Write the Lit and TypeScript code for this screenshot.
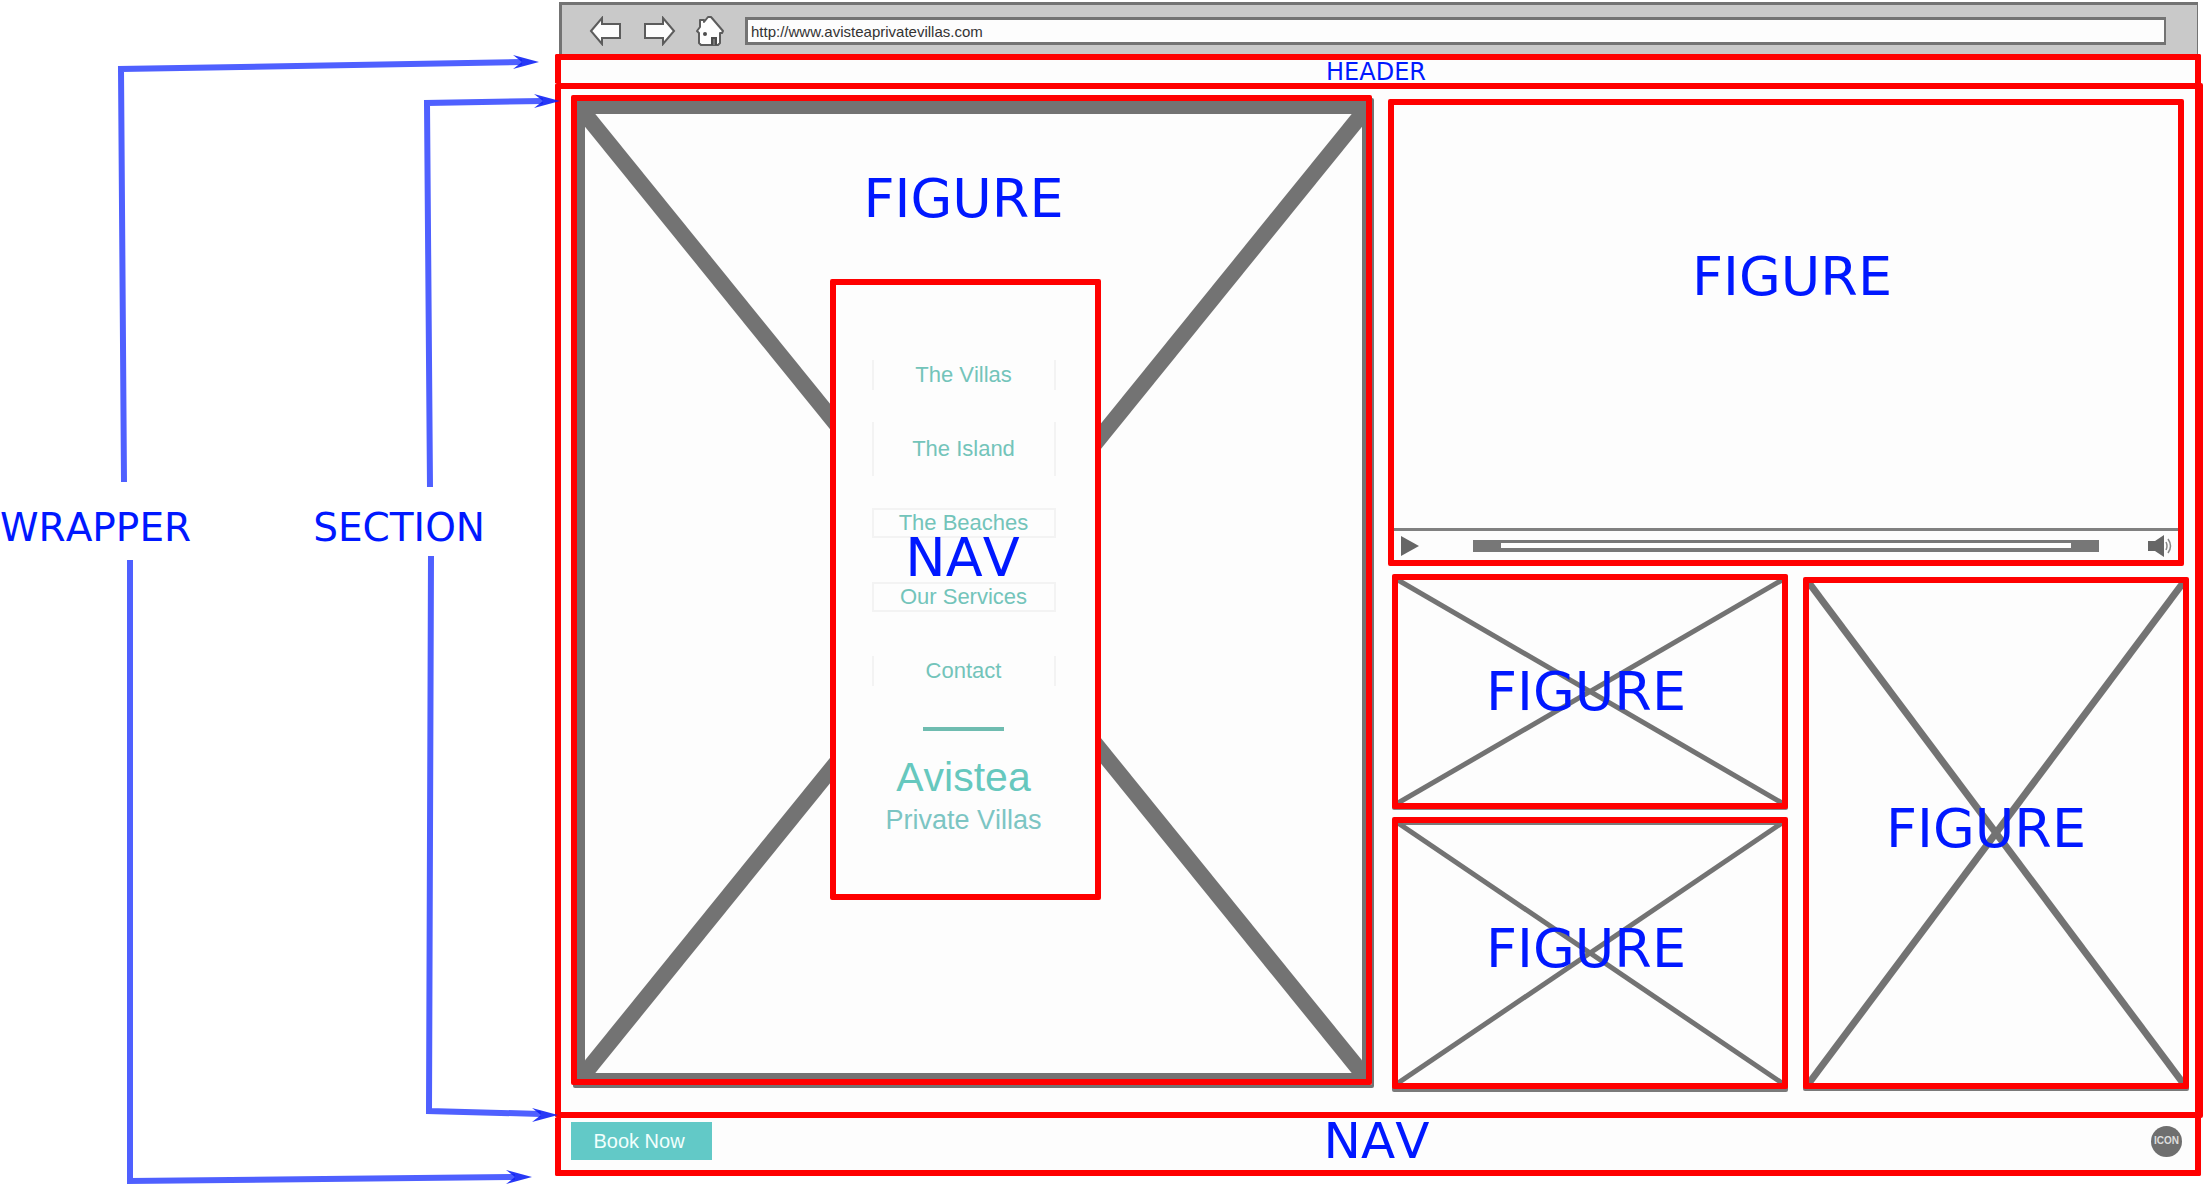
import { LitElement, html, css, svg } from "lit";
import { customElement, property } from "lit/decorators.js";

/** A wireframe placeholder: an outlined frame with a diagonal cross and a tag name. */
@customElement("wire-figure")
class WireFigure extends LitElement {
  @property() label = "FIGURE";
  @property({ type: Number }) stroke = 5;

  static styles = css`
    :host {
      display: block;
      position: relative;
      box-sizing: border-box;
      border: 6px solid #ff0000;
      border-radius: 2px;
      background: #fdfdfd;
      min-width: 0;
      min-height: 0;
    }
    .figure {
      margin: 0;
      width: 100%;
      height: 100%;
      display: flex;
      align-items: center;
      justify-content: center;
    }
    .cross {
      position: absolute;
      inset: 0;
      width: 100%;
      height: 100%;
    }
    .label {
      position: relative;
      font: 54px/60px Verdana, "DejaVu Sans", sans-serif;
      color: #0018ff;
      padding: var(--label-padding, 0 8px 0 0);
    }
  `;

  render() {
    return html`
      <figure class="figure">
        <svg class="cross" aria-hidden="true" stroke="#737373" stroke-width=${this.stroke}>
          <line x1="0" y1="0" x2="100%" y2="100%" />
          <line x1="100%" y1="0" x2="0" y2="100%" />
        </svg>
        <figcaption class="label">${this.label}</figcaption>
      </figure>
    `;
  }
}

/** Arrowhead whose tip sits at the given point. */
const head = (x: number, y: number) => svg`
  <path d="M${x} ${y} L${x - 26} ${y + 7} L${x - 17} ${y} L${x - 26} ${y - 7} Z" fill="#0f22f5" opacity="0.9" />`;

@customElement("app-root")
class AppRoot extends LitElement {
  static styles = css`
    :host {
      display: block;
      background: #fff;
      font-kerning: none;
    }
    * {
      box-sizing: border-box;
    }
    .page {
      display: grid;
      grid-template-columns: 555px minmax(0, 1fr);
      min-height: 100vh;
      padding: 2px 0 9px;
      position: relative;
      overflow: hidden;
    }
    .label {
      font-family: Verdana, "DejaVu Sans", sans-serif;
      color: #0018ff;
      margin: 0;
      font-weight: 400;
    }

    /* Notes on the left */
    .notes {
      display: flex;
      justify-content: space-between;
      align-items: flex-start;
      padding: 502px 70px 0 0;
    }
    .note {
      font-size: 39px;
      line-height: 48px;
    }
    .arrows {
      position: absolute;
      left: 0;
      top: 0;
      width: 562px;
      height: 1185px;
      z-index: 2;
      pointer-events: none;
    }

    /* Browser chrome */
    .browser {
      display: flex;
      flex-direction: column;
    }
    .bar {
      display: flex;
      align-items: center;
      height: 52px;
      margin: 0 5px 0 4px;
      padding: 3px 31px 0 27px;
      background: #c9c9c9;
      border: solid #737373;
      border-width: 3px 1px 0 3px;
    }
    .tool {
      display: block;
      padding: 0;
      border: 0;
      background: none;
      line-height: 0;
    }
    .forward {
      margin: 0 19px 0 23px;
    }
    .url {
      flex: 1;
      min-width: 0;
      height: 28px;
      margin-left: 20px;
      padding: 0 3px;
      border: 3px solid #737373;
      border-right-width: 2px;
      border-radius: 0;
      background: #fdfdfd;
      color: #333;
      font: 15px/20px "Liberation Sans", Arial, sans-serif;
    }

    /* Page regions */
    .wrapper {
      flex: 1;
      display: flex;
      flex-direction: column;
      background: #fdfdfd;
    }
    .header {
      display: flex;
      align-items: center;
      justify-content: center;
      height: 29px;
      margin-right: 2px;
      padding-right: 4px;
      border: solid #ff0000;
      border-width: 6px 6px 0;
      border-radius: 2px 2px 0 0;
    }
    .header .label {
      font-size: 24px;
      line-height: 24px;
    }
    .section {
      flex: 1;
      display: grid;
      grid-template-columns: repeat(2, minmax(0, 1fr));
      gap: 16px;
      padding: 6px 6px 23px 10px;
      border: 6px solid #ff0000;
      border-right-width: 8px;
      border-radius: 2px;
    }

    /* Hero figure */
    .hero {
      position: relative;
      display: flex;
      flex-direction: column;
      align-items: center;
      margin: 0 0 4px;
      padding: 68px 16px 0 0;
      border: 6px solid #ff0000;
      border-radius: 2px;
      box-shadow: 2px 3px 0 #737373;
    }
    .frame {
      position: absolute;
      inset: 0;
      border: solid #737373;
      border-width: 13px 4px 6px 8px;
    }
    .cross {
      position: absolute;
      inset: 0;
      width: 100%;
      height: 100%;
    }
    .big {
      position: relative;
      font-size: 54px;
      line-height: 60px;
    }
    .menu {
      position: relative;
      display: flex;
      flex-direction: column;
      align-items: center;
      width: 271px;
      height: 621px;
      margin: 50px 0 0 4px;
      padding: 75px 4px 0 0;
      border: 6px solid #ff0000;
      border-radius: 2px;
      background: #fdfdfd;
      font-family: "Liberation Sans", Arial, sans-serif;
      color: #73c4ba;
    }
    .links {
      display: flex;
      flex-direction: column;
      gap: 44px;
      margin: 0;
      padding: 0;
      list-style: none;
    }
    .link {
      display: flex;
      align-items: center;
      justify-content: center;
      width: 184px;
      height: 30px;
      border: solid #f3f3f3;
      border-width: 0 2px;
      color: inherit;
      text-decoration: none;
      font-size: 22px;
      line-height: 30px;
    }
    .link.boxed {
      border-width: 2px;
    }
    .link.long {
      height: 54px;
      margin: -12px 0;
    }
    .rule {
      width: 81px;
      height: 4px;
      margin: 41px 0 24px;
      border: 0;
      background: #6fbcb0;
    }
    .brand {
      margin: 0;
      font-weight: 400;
      font-size: 41px;
      line-height: 44px;
      color: #66c8be;
    }
    .tagline {
      margin: 5px 0 0;
      font-size: 27px;
      line-height: 32px;
      color: #7cc5c3;
    }
    .menu .big {
      position: absolute;
      top: 243px;
      left: 0;
      right: 6px;
      text-align: center;
    }

    /* Right column */
    .media {
      display: grid;
      grid-template-rows: minmax(0, 467fr) minmax(0, 515fr);
      gap: 8px;
      padding-top: 4px;
    }
    .video {
      display: flex;
      flex-direction: column;
      margin: 0 5px 0 0;
      border: 6px solid #ff0000;
      border-radius: 2px;
    }
    .stage {
      flex: 1;
      display: flex;
      align-items: center;
      justify-content: center;
      padding: 0 0 80px 12px;
    }
    .controls {
      display: flex;
      align-items: center;
      height: 32px;
      padding: 0 6px 0 7px;
      border-top: 3px solid #808080;
    }
    .seek {
      appearance: none;
      flex: 1;
      min-width: 0;
      height: 12px;
      margin: 0 49px 0 54px;
      background: linear-gradient(#fdfdfd, #fdfdfd) center / calc(100% - 56px) 5px no-repeat #777;
    }
    .seek::-webkit-slider-thumb {
      appearance: none;
      width: 1px;
      height: 1px;
      opacity: 0;
    }
    .gallery {
      display: grid;
      grid-template-columns: minmax(0, 396fr) minmax(0, 386fr);
      gap: 15px;
      padding-left: 4px;
    }
    .stack {
      display: grid;
      grid-template-rows: minmax(0, 235fr) minmax(0, 272fr);
      gap: 8px;
    }
    .small {
      --label-padding: 0 8px 0 0;
      box-shadow: 0 1px 0 #888;
    }
    .lower {
      --label-padding: 0 8px 8px 0;
      box-shadow: 0 3px 0 #7a7a7a, inset 0 2px 0 #7a7a7a;
    }
    .tall {
      --label-padding: 0 20px 8px 0;
      margin-top: 3px;
      box-shadow: 0 2px 0 #7a7a7a;
    }

    /* Bottom navigation */
    .footer {
      display: grid;
      grid-template-columns: 1fr auto 1fr;
      align-items: center;
      height: 58px;
      margin-right: 2px;
      padding: 0 13px 6px 10px;
      border: solid #ff0000;
      border-width: 0 6px 6px;
      border-radius: 0 0 2px 2px;
    }
    .book {
      justify-self: start;
      width: 141px;
      height: 38px;
      padding: 0 5px 0 0;
      border: 0;
      background: #62c9c7;
      color: #f2fffd;
      font: 20px/24px "Liberation Sans", Arial, sans-serif;
    }
    .footer .label {
      font-size: 50px;
      line-height: 46px;
    }
    .icon {
      justify-self: end;
      width: 31px;
      height: 31px;
      padding: 0;
      border: 0;
      border-radius: 50%;
      background: #6f6f6f;
      color: #dedede;
      font: bold 10px/12px "Liberation Sans", Arial, sans-serif;
    }
  `;

  private links = [
    { text: "The Villas", kind: "" },
    { text: "The Island", kind: "long" },
    { text: "The Beaches", kind: "boxed" },
    { text: "Our Services", kind: "boxed" },
    { text: "Contact", kind: "" },
  ];

  render() {
    return html`
      <div class="page">
        <aside class="notes">
          <span class="label note">WRAPPER</span>
          <span class="label note">SECTION</span>
        </aside>
        <svg class="arrows" viewBox="0 0 562 1185" aria-hidden="true">
          <g fill="none" stroke="#4f60ff" stroke-width="6">
            <path d="M124 482 L121 69 L522 62" />
            <path d="M430 487 L427 103 L543 101" />
            <path d="M130 560 L130 1181 L515 1177" />
            <path d="M431 556 L429 1111 L541 1114" />
          </g>
          ${head(539, 62)} ${head(560, 101)} ${head(532, 1177)} ${head(558, 1115)}
        </svg>

        <div class="browser">
          <div class="bar">
            <button class="tool" aria-label="Back">
              <svg width="32" height="30" viewBox="0 0 32 30">
                <path d="M2 15 L13 2 V8 H31 V22 H13 V28 Z" fill="#fdfdfd" stroke="#5c5c5c" stroke-width="2" />
              </svg>
            </button>
            <button class="tool forward" aria-label="Forward">
              <svg width="32" height="30" viewBox="0 0 32 30">
                <path d="M30 15 L19 2 V8 H1 V22 H19 V28 Z" fill="#fdfdfd" stroke="#5c5c5c" stroke-width="2" />
              </svg>
            </button>
            <button class="tool" aria-label="Home">
              <svg width="30" height="32" viewBox="0 0 30 32">
                <path
                  d="M2 16 L5 12 V5 H9 V7 L13 2 H16 L28 16 L27 18 L25 18 V28 L23 30 H6 L4 28 V18 Z"
                  fill="#fdfdfd" stroke="#5c5c5c" stroke-width="2" stroke-linejoin="round" />
                <circle cx="10" cy="19" r="2" fill="#4c4c4c" />
                <path d="M17 30 V23 H21 V30" fill="#777" stroke="#4c4c4c" stroke-width="2" />
              </svg>
            </button>
            <input class="url" type="text" aria-label="Address" value="http://www.avisteaprivatevillas.com" />
          </div>

          <div class="wrapper">
            <header class="header"><span class="label">HEADER</span></header>

            <section class="section">
              <figure class="hero">
                <div class="frame">
                  <svg class="cross" aria-hidden="true" stroke="#737373" stroke-width="16">
                    <line x1="0" y1="0" x2="100%" y2="100%" />
                    <line x1="100%" y1="0" x2="0" y2="100%" />
                  </svg>
                </div>
                <figcaption class="label big">FIGURE</figcaption>
                <nav class="menu">
                  <ul class="links">
                    ${this.links.map(
                      (l) => html`<li><a class="link ${l.kind}" href="#">${l.text}</a></li>`
                    )}
                  </ul>
                  <hr class="rule" />
                  <h1 class="brand">Avistea</h1>
                  <p class="tagline">Private Villas</p>
                  <span class="label big">NAV</span>
                </nav>
              </figure>

              <div class="media">
                <figure class="video">
                  <div class="stage"><figcaption class="label big">FIGURE</figcaption></div>
                  <div class="controls">
                    <button class="tool" aria-label="Play">
                      <svg width="18" height="20" viewBox="0 0 18 20"><path d="M0 0 L18 10 L0 20 Z" fill="#666" /></svg>
                    </button>
                    <input class="seek" type="range" aria-label="Seek" value="0" />
                    <button class="tool" aria-label="Volume">
                      <svg width="24" height="22" viewBox="0 0 24 22">
                        <path d="M0 6 H7 L16 0 V22 L7 16 H0 Z" fill="#666" />
                        <path d="M18 7 Q20 11 18 15 M20 4 Q25 11 20 18" fill="none" stroke="#888" stroke-width="1.5" />
                      </svg>
                    </button>
                  </div>
                </figure>
                <div class="gallery">
                  <div class="stack">
                    <wire-figure class="small"></wire-figure>
                    <wire-figure class="lower"></wire-figure>
                  </div>
                  <wire-figure class="tall" stroke="7"></wire-figure>
                </div>
              </div>
            </section>

            <nav class="footer">
              <button class="book">Book Now</button>
              <span class="label">NAV</span>
              <button class="icon">ICON</button>
            </nav>
          </div>
        </div>
      </div>
    `;
  }
}
